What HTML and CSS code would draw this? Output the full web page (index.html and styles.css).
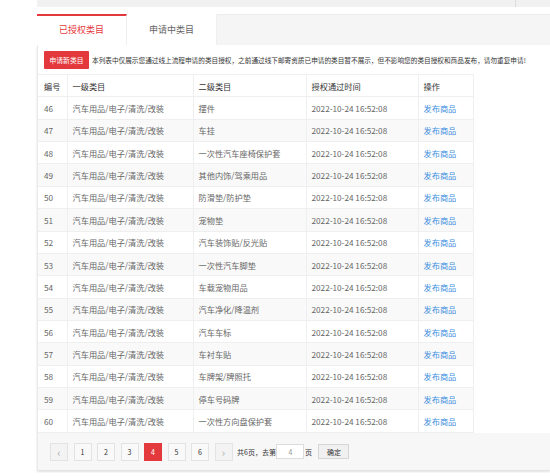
FILE: index.html
```html
<!DOCTYPE html>
<html lang="zh">
<head>
<meta charset="utf-8">
<link rel="stylesheet" href="styles.css">
</head>
<body>
<div class="panel">
  <div class="topstrip"><div class="topstrip-main"></div><div class="topstrip-side"></div></div>
  <div class="tabs">
    <div class="tab active">已授权类目</div>
    <div class="tab">申请中类目</div>
  </div>
  <div class="content">
    <div class="notice-row">
      <span class="btn-red">申请新类目</span>
      <span class="notice">本列表中仅展示您通过线上流程申请的类目授权，之前通过线下邮寄资质已申请的类目暂不展示，但不影响您的类目授权和商品发布，请勿重复申请!</span>
    </div>
    <table class="grid">
      <colgroup><col class="c1"><col class="c2"><col class="c3"><col class="c4"><col class="c5"></colgroup>
      <thead>
        <tr><th>编号</th><th>一级类目</th><th>二级类目</th><th>授权通过时间</th><th>操作</th></tr>
      </thead>
      <tbody>
        <tr><td>46</td><td>汽车用品/电子/清洗/改装</td><td>摆件</td><td>2022-10-24 16:52:08</td><td><a class="link">发布商品</a></td></tr>
        <tr><td>47</td><td>汽车用品/电子/清洗/改装</td><td>车挂</td><td>2022-10-24 16:52:08</td><td><a class="link">发布商品</a></td></tr>
        <tr><td>48</td><td>汽车用品/电子/清洗/改装</td><td>一次性汽车座椅保护套</td><td>2022-10-24 16:52:08</td><td><a class="link">发布商品</a></td></tr>
        <tr><td>49</td><td>汽车用品/电子/清洗/改装</td><td>其他内饰/驾乘用品</td><td>2022-10-24 16:52:08</td><td><a class="link">发布商品</a></td></tr>
        <tr><td>50</td><td>汽车用品/电子/清洗/改装</td><td>防滑垫/防护垫</td><td>2022-10-24 16:52:08</td><td><a class="link">发布商品</a></td></tr>
        <tr><td>51</td><td>汽车用品/电子/清洗/改装</td><td>宠物垫</td><td>2022-10-24 16:52:08</td><td><a class="link">发布商品</a></td></tr>
        <tr><td>52</td><td>汽车用品/电子/清洗/改装</td><td>汽车装饰贴/反光贴</td><td>2022-10-24 16:52:08</td><td><a class="link">发布商品</a></td></tr>
        <tr><td>53</td><td>汽车用品/电子/清洗/改装</td><td>一次性汽车脚垫</td><td>2022-10-24 16:52:08</td><td><a class="link">发布商品</a></td></tr>
        <tr><td>54</td><td>汽车用品/电子/清洗/改装</td><td>车载宠物用品</td><td>2022-10-24 16:52:08</td><td><a class="link">发布商品</a></td></tr>
        <tr><td>55</td><td>汽车用品/电子/清洗/改装</td><td>汽车净化/降温剂</td><td>2022-10-24 16:52:08</td><td><a class="link">发布商品</a></td></tr>
        <tr><td>56</td><td>汽车用品/电子/清洗/改装</td><td>汽车车标</td><td>2022-10-24 16:52:08</td><td><a class="link">发布商品</a></td></tr>
        <tr><td>57</td><td>汽车用品/电子/清洗/改装</td><td>车衬车贴</td><td>2022-10-24 16:52:08</td><td><a class="link">发布商品</a></td></tr>
        <tr><td>58</td><td>汽车用品/电子/清洗/改装</td><td>车牌架/牌照托</td><td>2022-10-24 16:52:08</td><td><a class="link">发布商品</a></td></tr>
        <tr><td>59</td><td>汽车用品/电子/清洗/改装</td><td>停车号码牌</td><td>2022-10-24 16:52:08</td><td><a class="link">发布商品</a></td></tr>
        <tr><td>60</td><td>汽车用品/电子/清洗/改装</td><td>一次性方向盘保护套</td><td>2022-10-24 16:52:08</td><td><a class="link">发布商品</a></td></tr>
      </tbody>
    </table>
    <div class="pager">
      <span class="pg arrow">&#8249;</span>
      <span class="pg">1</span>
      <span class="pg">2</span>
      <span class="pg">3</span>
      <span class="pg current">4</span>
      <span class="pg">5</span>
      <span class="pg">6</span>
      <span class="pg arrow">&#8250;</span>
      <span class="pg-text">共6页，去第</span>
      <span class="pg-input">4</span>
      <span class="pg-text">页</span>
      <span class="pg-ok">确定</span>
    </div>
  </div>
</div>
</body>
</html>
```

FILE: styles.css
```css
html, body {
  margin: 0;
  padding: 0;
  background: #fff;
  overflow: hidden;
}
body {
  font-family: "Noto Sans CJK SC", "Microsoft YaHei", sans-serif;
  color: #333;
}
.panel {
  margin-left: 37px;
  height: 473px;
  display: flex;
  flex-direction: column;
}
.topstrip {
  display: flex;
  height: 7px;
  margin-bottom: 7px;
}
.topstrip-main {
  width: 478px;
  background: #f1f1f1;
  border-right: 1px solid #dcdcdc;
}
.topstrip-side {
  flex: 1;
  background: #f1f1f1;
}
.tabs {
  display: flex;
  height: 31px;
  background: #f5f5f5;
  border-top: 1px solid #ececec;
  box-sizing: border-box;
}
.tab {
  width: 90px;
  background: #fff;
  font-size: 9px;
  color: #666;
  display: flex;
  align-items: center;
  justify-content: center;
  border-right: 1px solid #eee;
  box-sizing: border-box;
  margin-top: -1px;
}
.tab.active {
  color: #e4393c;
  border-top: 2px solid #e4393c;
  padding-bottom: 2px;
}
.content {
  flex: 1;
  display: flex;
  flex-direction: column;
  border-left: 1px solid #eaeaea;
  box-shadow: 0 2px 2px rgba(0,0,0,0.12);
  margin-bottom: 3px;
}
.notice-row {
  display: flex;
  align-items: center;
  padding: 6px 0 5px 6px;
  gap: 3px;
}
.btn-red {
  background: #e4393c;
  color: #fff;
  font-size: 6.8px;
  width: 45px;
  height: 18px;
  display: flex;
  align-items: center;
  justify-content: center;
  border-radius: 1px;
}
.notice {
  font-size: 6.65px;
  color: #333;
  white-space: nowrap;
}
.grid {
  border-collapse: collapse;
  table-layout: fixed;
  width: 435px;
  font-size: 8.2px;
}
.c1 { width: 29px; }
.c2 { width: 126px; }
.c3 { width: 113px; }
.c4 { width: 112px; }
.c5 { width: 55px; }
.grid th, .grid td {
  height: 22.36px;
  padding: 0 5px;
  border: 1px solid #efefef;
  text-align: left;
  white-space: nowrap;
  box-sizing: border-box;
}
.grid th {
  font-weight: normal;
  color: #333;
  background: #fff;
}
.grid td {
  color: #666;
}
.grid tr > :first-child {
  border-left: none;
  padding-left: 6px;
}
.grid tbody tr:nth-child(even) td {
  background: #f9f9f9;
}
.link {
  color: #3b8de0;
}
.pager {
  flex: 1;
  background: #f7f7f7;
  display: flex;
  align-items: flex-start;
  padding: 10px 0 0 12px;
  gap: 5.5px;
  font-size: 7px;
}
.pg {
  width: 18px;
  height: 18px;
  box-sizing: border-box;
  border: 1px solid #e3e3e3;
  background: #f9f9f9;
  display: flex;
  align-items: center;
  justify-content: center;
  color: #333;
  font-size: 7px;
}
.pg.arrow {
  color: #aaa;
  font-size: 11px;
  background: #f3f3f3;
}
.pg.current {
  background: #e4393c;
  border-color: #e4393c;
  color: #fff;
}
.pg-text {
  height: 18px;
  display: flex;
  align-items: center;
  color: #333;
  margin-left: -1px;
}
.pg-input {
  width: 28px;
  height: 15px;
  margin-top: 1.5px;
  box-sizing: border-box;
  border: 1px solid #ddd;
  background: #fff;
  color: #999;
  display: flex;
  align-items: center;
  justify-content: center;
  margin-left: -5px;
  margin-right: -4px;
}
.pg-ok {
  width: 31px;
  height: 15px;
  margin-top: 1.5px;
  margin-left: 1px;
  box-sizing: border-box;
  border: 1px solid #d6d6d6;
  background: #f0f0f0;
  display: flex;
  align-items: center;
  justify-content: center;
  color: #333;
}
```
